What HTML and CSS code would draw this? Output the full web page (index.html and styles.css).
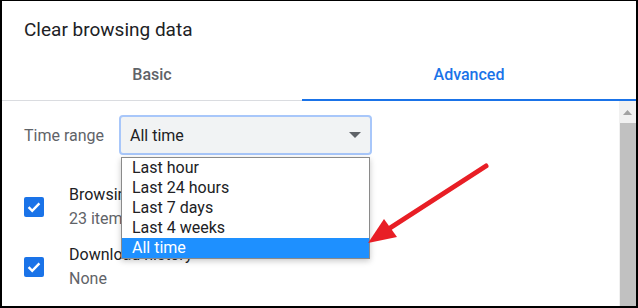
FILE: index.html
```html
<!DOCTYPE html>
<html lang="en">
<head>
<meta charset="utf-8">
<title>Clear browsing data</title>
<link rel="stylesheet" href="styles.css">
</head>
<body>
<div class="frame">
  <h1 class="title">Clear browsing data</h1>
  <div class="tabs">
    <div class="tab tab-basic">Basic</div>
    <div class="tab tab-active">Advanced</div>
  </div>
  <div class="body">
    <div class="content">
      <div class="range-row">
        <span class="label">Time range</span>
        <div class="select-wrap">
          <div class="select">
            <span>All time</span>
            <svg class="caret" width="12" height="6" viewBox="0 0 12 6"><path d="M0 0h12L6 6z" fill="#5f6368"/></svg>
          </div>
          <ul class="dropdown">
            <li>Last hour</li>
            <li>Last 24 hours</li>
            <li>Last 7 days</li>
            <li>Last 4 weeks</li>
            <li class="selected">All time</li>
          </ul>
        </div>
      </div>
      <div class="check-row">
        <span class="checkbox"><svg width="20" height="20" viewBox="0 0 20 20"><path d="M4.6 10.2l3.6 3.6 7.2-7.4" fill="none" stroke="#fff" stroke-width="2.4"/></svg></span>
        <div class="texts">
          <div class="name">Browsing history</div>
          <div class="sub">23 items</div>
        </div>
      </div>
      <div class="check-row">
        <span class="checkbox"><svg width="20" height="20" viewBox="0 0 20 20"><path d="M4.6 10.2l3.6 3.6 7.2-7.4" fill="none" stroke="#fff" stroke-width="2.4"/></svg></span>
        <div class="texts">
          <div class="name">Download history</div>
          <div class="sub">None</div>
        </div>
      </div>
    </div>
    <div class="scrollbar">
      <div class="sb-up"><svg width="9" height="5" viewBox="0 0 9 5"><path d="M0 5L4.5 0 9 5z" fill="#a3a3a3"/></svg></div>
      <div class="sb-thumb"></div>
    </div>
  </div>
  <svg class="annotation" width="638" height="308" viewBox="0 0 638 308">
    <line x1="486" y1="166" x2="390" y2="228" stroke="#e81e25" stroke-width="5" stroke-linecap="round"/>
    <polygon points="368,243 384,219 397,237" fill="#e81e25"/>
  </svg>
</div>
</body>
</html>
```
FILE: styles.css
```css
html, body {
  margin: 0;
  padding: 0;
  background: #fff;
}
.frame {
  position: relative;
  width: 638px;
  height: 308px;
  box-sizing: border-box;
  border-style: solid;
  border-color: #000;
  border-width: 1px 2px 2px 2px;
  background: #fff;
  font-family: Roboto, "Liberation Sans", sans-serif;
  color: #202124;
  display: flex;
  flex-direction: column;
  overflow: hidden;
}
.title {
  margin: 0;
  padding: 17px 0 0 22px;
  font-size: 19px;
  line-height: 24px;
  font-weight: 400;
  color: #202124;
}
.tabs {
  display: flex;
  border-bottom: 1px solid #dadce0;
}
.tab {
  position: relative;
  padding: 23px 0 15px;
  font-size: 16px;
  line-height: 20px;
  font-weight: 500;
  text-align: center;
}
.tab-basic {
  width: 300px;
  color: #5f6368;
}
.tab-active {
  flex: 1;
  color: #1a73e8;
}
.tab-active::after {
  content: "";
  position: absolute;
  left: 0;
  right: 0;
  bottom: -1px;
  height: 2px;
  background: #1a73e8;
}
.body {
  flex: 1;
  display: flex;
  min-height: 0;
}
.content {
  flex: 1;
  padding: 14px 0 0 22px;
}
.range-row {
  display: flex;
  align-items: center;
}
.label {
  width: 95px;
  font-size: 16px;
  color: #5f6368;
}
.select-wrap {
  position: relative;
}
.select {
  width: 253px;
  height: 40px;
  box-sizing: border-box;
  border: 2px solid #a8c7fa;
  border-radius: 4px;
  background: #f1f3f4;
  display: flex;
  align-items: center;
  justify-content: space-between;
  padding: 0 9px;
  font-size: 16px;
  color: #202124;
}
.caret {
  display: block;
}
.dropdown {
  position: absolute;
  top: 42px;
  left: 2px;
  width: 249px;
  box-sizing: border-box;
  margin: 0;
  padding: 0;
  list-style: none;
  background: #fff;
  border: 1px solid #8a8a8a;
  box-shadow: 0 2px 6px rgba(0, 0, 0, 0.22);
  z-index: 2;
}
.dropdown li {
  height: 20px;
  line-height: 20px;
  padding-left: 10px;
  font-size: 16px;
  color: #202124;
}
.dropdown li.selected {
  background: #1e90ff;
  color: #fff;
}
.check-row {
  display: flex;
  align-items: center;
  margin-top: 12px;
}
.range-row + .check-row {
  margin-top: 28px;
}
.checkbox {
  width: 20px;
  height: 20px;
  border-radius: 2px;
  background: #1a73e8;
  margin-right: 25px;
  flex: none;
}
.checkbox svg {
  display: block;
}
.texts {
  font-size: 16px;
  line-height: 24px;
}
.name {
  color: #202124;
}
.sub {
  color: #5f6368;
}
.scrollbar {
  width: 17px;
  background: #f1f1f1;
  display: flex;
  flex-direction: column;
}
.sb-up {
  height: 22px;
  display: flex;
  align-items: center;
  justify-content: center;
}
.sb-up svg {
  display: block;
}
.sb-thumb {
  flex: 1;
  margin: 0 0 0 1px;
  background: #c1c1c1;
}
.annotation {
  position: absolute;
  left: -2px;
  top: -1px;
  z-index: 5;
  pointer-events: none;
}
```
